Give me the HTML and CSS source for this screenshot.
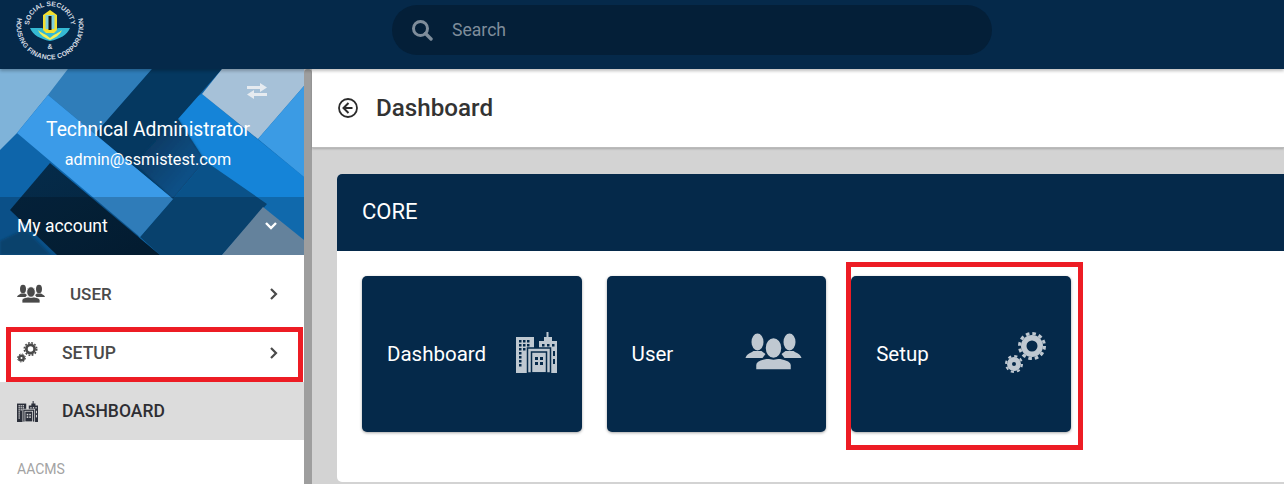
FILE: index.html
```html
<!DOCTYPE html>
<html lang="en">
<head>
  <meta charset="UTF-8" />
  <title>Dashboard</title>
  <link rel="stylesheet" href="styles.css">
</head>
<body>

  <svg class="defs" width="0" height="0">
    <symbol id="i-users" viewBox="0 0 56 38">
      <ellipse cx="12" cy="10" rx="6" ry="8.500"/>
      <path d="M0 26c1-4 5-5 8-7h8l4 3-3 4z"/>
      <ellipse cx="44" cy="10" rx="6" ry="8.500"/>
      <path d="M56 26c-1-4-5-5-8-7h-8l-4 3 3 4z"/>
      <ellipse cx="28" cy="16" rx="8.500" ry="10.500" class="cut"/>
      <path d="M10 38v-5c0-5 7-6 12-7l6 1 6-1c5 1 12 2 12 7v5z" class="cut"/>
    </symbol>
    <symbol id="i-cogs" viewBox="0 0 42 42">
      <circle cx="27" cy="14" r="8.250" fill="none" stroke="currentColor" stroke-width="5.500"/>
      <circle cx="27" cy="14" r="12.500" fill="none" stroke="currentColor" stroke-width="3" stroke-dasharray="3.600 2.940"/>
      <circle cx="9" cy="32" r="4.500" fill="none" stroke="currentColor" stroke-width="5"/>
      <circle cx="9" cy="32" r="8" fill="none" stroke="currentColor" stroke-width="2" stroke-dasharray="3.200 3.080"/>
    </symbol>
    <symbol id="i-building" viewBox="0 0 41 41">
      <rect x="0" y="5" width="18" height="36"/>
      <path d="M23 9h5V5h2.500V0h2v5H36v4h5v32H23z"/>
      <g class="win">
        <rect x="3" y="8" width="2.500" height="2.500"/><rect x="7" y="8" width="2.500" height="2.500"/><rect x="11" y="8" width="2.500" height="2.500"/>
        <rect x="3" y="12" width="2.500" height="2.500"/><rect x="7" y="12" width="2.500" height="2.500"/><rect x="11" y="12" width="2.500" height="2.500"/>
        <rect x="3" y="16" width="2.500" height="2.500"/><rect x="7" y="16" width="2.500" height="2.500"/>
        <rect x="3" y="20" width="2.500" height="2.500"/><rect x="3" y="24" width="2.500" height="2.500"/><rect x="3" y="28" width="2.500" height="2.500"/><rect x="3" y="32" width="2.500" height="2.500"/>
        <rect x="26" y="12" width="2.500" height="2.500"/><rect x="31" y="12" width="2.500" height="2.500"/><rect x="36" y="12" width="2.500" height="2.500"/>
        <rect x="37" y="19" width="2" height="5"/><rect x="37" y="27" width="2" height="5"/>
      </g>
      <rect x="11.500" y="16" width="23" height="25" class="cut"/>
      <rect x="15.500" y="20" width="15" height="21" fill="none" class="line"/>
      <g class="win">
        <rect x="19" y="25" width="3" height="3"/><rect x="24" y="25" width="3" height="3"/>
        <rect x="19" y="30" width="3" height="3"/><rect x="24" y="30" width="3" height="3"/>
      </g>
    </symbol>
    <symbol id="i-chevron" viewBox="0 0 10 14">
      <path d="M2 2l5 5-5 5" fill="none" stroke="currentColor" stroke-width="2.200"/>
    </symbol>
  </svg>

  <header class="topbar">
    <svg class="logo" width="100" height="69" viewBox="0 0 100 69">
      <defs>
        <path id="arc-outer" d="M21 9.250A33.500 33.500 0 1 0 79 9.250"/>
        <path id="arc-inner" d="M29 27A21 21 0 1 1 71 27"/>
      </defs>
      <text class="logo-text outer"><textPath href="#arc-outer" startOffset="50%" text-anchor="middle">HOUSING FINANCE CORPORATION</textPath></text>
      <text class="logo-text"><textPath href="#arc-inner" startOffset="50%" text-anchor="middle">SOCIAL SECURITY</textPath></text>
      <text class="logo-text" x="50" y="49" text-anchor="middle">&amp;</text>
      <path d="M30 28h12l8 5 8-5h12c-3 7-10 11-20 13-10-2-17-6-20-13z" fill="#35b9d3"/>
      <path d="M38 30c3 3 8 4 12 8 4-4 9-5 12-8-2 5-7 8-12 10-5-2-10-5-12-10z" fill="#f6ee55"/>
      <path d="M43 30V15l7-5 7 5v15l-3 3h-8z" fill="#f3df2e"/>
      <path d="M45.500 29V15h9v14z" fill="#7fd0dc"/>
      <rect x="48.500" y="16" width="3" height="14" fill="#111"/>
    </svg>
    <div class="search">
      <svg width="22" height="22" viewBox="0 0 22 22"><circle cx="9.500" cy="9.500" r="7" fill="none" stroke="currentColor" stroke-width="3"/><path d="M14.500 14.500l5.500 5.500" stroke="currentColor" stroke-width="3.400" stroke-linecap="round"/></svg>
      <span>Search</span>
    </div>
  </header>

  <div class="layout">
    <aside class="sidebar">
      <div class="profile">
        <svg class="profile-bg" viewBox="0 0 304 186" preserveAspectRatio="none">
          <defs>
            <linearGradient id="g-diamond" x1="0" y1="0" x2="1" y2="1">
              <stop offset="0" stop-color="#052f52"/>
              <stop offset="1" stop-color="#0c5c99"/>
            </linearGradient>
            <linearGradient id="g-dark" x1="0" y1="0" x2="1" y2="1">
              <stop offset="0" stop-color="#052c4b"/>
              <stop offset="1" stop-color="#04233c"/>
            </linearGradient>
            <filter id="soft" x="-20%" y="-20%" width="140%" height="140%">
              <feGaussianBlur stdDeviation="0.800"/>
            </filter>
          </defs>
          <rect width="304" height="186" fill="#0e65aa"/>
          <polygon points="130,60 202,25 304,108 304,186 140,186" fill="#1584d8"/>
          <polygon points="68,0 152,0 95,65 48,26" fill="#2f7db9"/>
          <polygon points="152,0 222,0 178,50 205,92 173,130 95,65" fill="#053860"/>
          <polygon points="157,70 178,50 205,92 173,130 135,95" fill="url(#g-diamond)" filter="url(#soft)"/>
          <polygon points="0,0 68,0 48,26 17,64 0,81" fill="#7fb3d9"/>
          <polygon points="222,0 304,0 304,17 258,70 202,25" fill="#a6c1d8"/>
          <polygon points="304,17 258,70 304,108" fill="#3b9be4"/>
          <polygon points="173,130 205,92 267,135 222,186 160,186 140,168" fill="#0a5289"/>
          <polygon points="263,138 304,171 304,186 222,186" fill="#7ea3c4"/>
          <polygon points="50,94 160,186 57,186 10,141" fill="url(#g-dark)"/>
          <polygon points="0,186 0,172 25,160 51,186" fill="#0c5288" filter="url(#soft)"/>
          <polygon points="48,26 173,130 140,168 17,64" fill="#3b9be8"/>
          <rect y="128" width="304" height="58" fill="#000" opacity="0.2"/>
        </svg>
        <svg class="swap" width="20" height="16" viewBox="0 0 20 16">
          <path d="M0 3h13V0l7 4.500L13 9V6H0zM20 10H7V7l-7 4.500L7 16v-3h13z" fill="#e6ebf0"/>
        </svg>
        <div class="profile-name">Technical Administrator</div>
        <div class="profile-mail">admin@ssmistest.com</div>
        <div class="account">
          <span>My account</span>
          <svg width="14" height="10" viewBox="0 0 14 10"><path d="M2 2l5 5 5-5" fill="none" stroke="#fff" stroke-width="2.400"/></svg>
        </div>
      </div>
      <nav class="menu">
        <a class="menu-item">
          <svg class="menu-icon" width="28" height="19"><use href="#i-users"/></svg>
          <span class="label-wide">USER</span>
          <svg class="chev" width="10" height="14"><use href="#i-chevron"/></svg>
        </a>
        <a class="menu-item">
          <svg class="menu-icon" width="21" height="21"><use href="#i-cogs"/></svg>
          <span>SETUP</span>
          <svg class="chev" width="10" height="14"><use href="#i-chevron"/></svg>
        </a>
        <a class="menu-item active">
          <svg class="menu-icon" width="21" height="21"><use href="#i-building"/></svg>
          <span>DASHBOARD</span>
        </a>
        <div class="menu-title">AACMS</div>
      </nav>
    </aside>
    <div class="scrollbar"></div>

    <main class="main">
      <div class="page-head">
        <svg width="22" height="22" viewBox="0 0 22 22"><circle cx="11" cy="11" r="9" fill="none" stroke="#2b2b2b" stroke-width="1.800"/><path d="M11.500 6l-5 5 5 5M6.500 11h9" fill="none" stroke="#2b2b2b" stroke-width="2"/></svg>
        <h1>Dashboard</h1>
      </div>
      <section class="card">
        <div class="card-head">CORE</div>
        <div class="tiles">
          <a class="tile"><span>Dashboard</span><svg width="41" height="41"><use href="#i-building"/></svg></a>
          <a class="tile"><span>User</span><svg class="tile-users" width="57" height="38"><use href="#i-users"/></svg></a>
          <a class="tile"><span>Setup</span><svg class="tile-cogs" width="42" height="42"><use href="#i-cogs"/></svg></a>
        </div>
      </section>
    </main>
  </div>

  <div class="mark mark-menu"></div>
  <div class="mark mark-tile"></div>

</body>
</html>
```

FILE: styles.css
```css
* {
  margin: 0;
  padding: 0;
  box-sizing: border-box;
}

html, body {
  height: 100%;
  overflow: hidden;
  font-family: Roboto, "Liberation Sans", sans-serif;
  background: #d3d3d3;
}

.defs {
  position: absolute;
}

/* icon parts that take the colour behind the icon */
.cut {
  stroke: var(--cut);
  stroke-width: 1.500;
}

.line {
  stroke: var(--cut);
  stroke-width: 1.500;
}

.win {
  fill: var(--cut);
}

.topbar {
  height: 69px;
  background: #05294a;
  position: relative;
  display: flex;
  padding-left: 392px;
  box-shadow: 0 2px 3px rgba(0, 0, 0, 0.25);
  z-index: 5;
}

.logo {
  position: absolute;
  left: 0;
  top: 0;
}

.logo-text {
  font-family: "Liberation Sans", sans-serif;
  font-size: 6.800px;
  font-weight: bold;
  fill: #d5dce3;
}

.logo-text.outer {
  font-size: 6.800px;
  letter-spacing: 0.200px;
}

.search {
  width: 600px;
  height: 50px;
  margin-top: 5px;
  border-radius: 25px;
  background: #041f38;
  color: #7f8d9b;
  display: flex;
  align-items: center;
  gap: 19px;
  padding-left: 19px;
  font-size: 17.600px;
}

.layout {
  display: flex;
  height: 415px;
}

.sidebar {
  width: 304px;
  background: #fff;
  flex: none;
}

.profile {
  height: 186px;
  position: relative;
  color: #fff;
  text-align: center;
  overflow: hidden;
}

.profile-bg {
  position: absolute;
  left: 0;
  top: 0;
  width: 100%;
  height: 100%;
}

.swap {
  position: absolute;
  right: 37px;
  top: 14px;
}

.profile-name {
  position: relative;
  padding: 49px 8px 0 0;
  font-size: 19.300px;
  line-height: 24px;
}

.profile-mail {
  position: relative;
  margin-top: 8px;
  padding-right: 8px;
  font-size: 16.200px;
  line-height: 20px;
}

.account {
  position: absolute;
  left: 0;
  right: 0;
  bottom: 0;
  height: 58px;
  display: flex;
  align-items: center;
  justify-content: space-between;
  padding: 0 26px 0 17px;
  font-size: 17.500px;
}

.menu {
  padding-top: 9px;
  --cut: #fff;
}

.menu-item {
  height: 59px;
  display: flex;
  align-items: center;
  padding: 0 25px 0 17px;
  font-size: 17.500px;
  font-weight: 500;
  color: #4a4a4a;
}

.menu-item span {
  margin-left: 24px;
  flex: 1;
}

.menu-item .label-wide {
  margin-left: 25px;
  font-size: 17px;
}

.menu-item.active {
  height: 58px;
  background: #dcdcdc;
  color: #2e2e33;
  --cut: #dcdcdc;
}

.menu-icon {
  color: #4a4a4a;
  fill: #4a4a4a;
  flex: none;
}

.menu-item.active .menu-icon {
  color: #2b2f3a;
  fill: #2b2f3a;
}

.chev {
  color: #4a4a4a;
}

.menu-title {
  padding: 21px 0 0 17px;
  font-size: 14px;
  color: #a3a3a3;
}

.scrollbar {
  width: 8px;
  flex: none;
  background: #9e9e9e;
  border-radius: 4px 4px 0 0;
}

.main {
  flex: 1;
  min-width: 0;
}

.page-head {
  height: 79px;
  background: #fff;
  display: flex;
  align-items: center;
  gap: 17px;
  padding-left: 25px;
  border-bottom: 1px solid #bbb;
  box-shadow: 0 1px 2px rgba(0, 0, 0, 0.2);
}

.page-head h1 {
  font-size: 24.200px;
  font-weight: 500;
  color: #333;
}

.card {
  margin: 26px -20px 0 25px;
  height: 308px;
  background: #fff;
  border-radius: 5px;
  overflow: hidden;
}

.card-head {
  height: 77px;
  background: #05294a;
  color: #fff;
  font-size: 22px;
  line-height: 76px;
  padding-left: 25px;
}

.tiles {
  display: flex;
  gap: 25px;
  padding: 25px;
}

.tile {
  width: 219.600px;
  height: 156px;
  flex: none;
  background: #05294a;
  border-radius: 5px;
  box-shadow: 0 1px 3px rgba(0, 0, 0, 0.35);
  color: #fff;
  font-size: 20.500px;
  display: flex;
  justify-content: space-between;
  align-items: flex-start;
  padding: 66px 25px 0;
  fill: #bfc8d1;
  --cut: #05294a;
}

.tile svg {
  color: #bfc8d1;
  margin-top: -10px;
}

.tile .tile-users,
.tile .tile-cogs {
  margin-right: -1px;
}

.mark {
  position: absolute;
  border: 5px solid #ed1c24;
  z-index: 10;
}

.mark-menu {
  left: 6px;
  top: 327px;
  width: 297px;
  height: 55px;
}

.mark-tile {
  left: 846px;
  top: 262px;
  width: 237px;
  height: 188px;
}
```
